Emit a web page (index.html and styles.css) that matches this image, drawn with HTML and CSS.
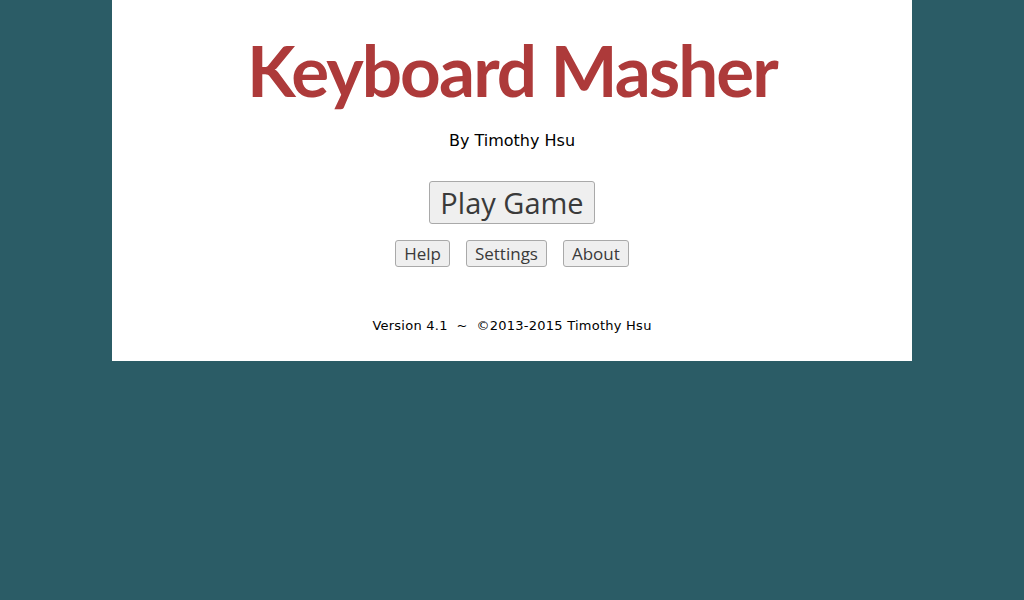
FILE: index.html
```html
<!DOCTYPE html>
<html>
<head>
<meta charset="utf-8">
<link rel="stylesheet" href="styles.css">
</head>
<body>
<div class="panel">
  <h1 class="title">Keyboard Masher</h1>
  <p class="byline">By Timothy Hsu</p>
  <button class="btn btn-big">Play Game</button>
  <div class="small-row">
    <button class="btn btn-small">Help</button>
    <button class="btn btn-small">Settings</button>
    <button class="btn btn-small">About</button>
  </div>
  <p class="footer">Version 4.1&nbsp;&nbsp;~&nbsp;&nbsp;©2013-2015 Timothy Hsu</p>
</div>
</body>
</html>
```
FILE: styles.css
```css
html, body {
  margin: 0;
  padding: 0;
  background: #2b5c66;
}
.panel {
  width: 800px;
  height: 361px;
  margin: 0 auto;
  background: #fff;
  display: flex;
  flex-direction: column;
  align-items: center;
  box-sizing: border-box;
  padding-top: 28px;
}
.title {
  margin: 0;
  font-family: "Lato", "DejaVu Sans", sans-serif;
  font-weight: bold;
  font-size: 71px;
  line-height: 84px;
  letter-spacing: -1.9px;
  color: #ad3a3a;
}
.byline {
  margin: 19px 0 0;
  font-family: "DejaVu Sans", sans-serif;
  font-size: 16px;
  line-height: 20px;
  color: #000;
}
.btn {
  font-family: "Open Sans", sans-serif;
  background: #efefef;
  border: 1px solid #a9a9a9;
  border-radius: 3px;
  color: #3a3a3a;
  padding: 0;
}
.btn-big {
  margin-top: 30px;
  width: 166px;
  height: 43px;
  font-size: 29px;
}
.small-row {
  margin-top: 16px;
  display: flex;
  gap: 16px;
}
.btn-small {
  height: 27px;
  font-size: 17px;
  padding: 0 8px;
}
.footer {
  margin: 51px 0 0;
  font-family: "DejaVu Sans", sans-serif;
  font-size: 13px;
  line-height: 16px;
  letter-spacing: 0.25px;
  color: #000;
}
```
